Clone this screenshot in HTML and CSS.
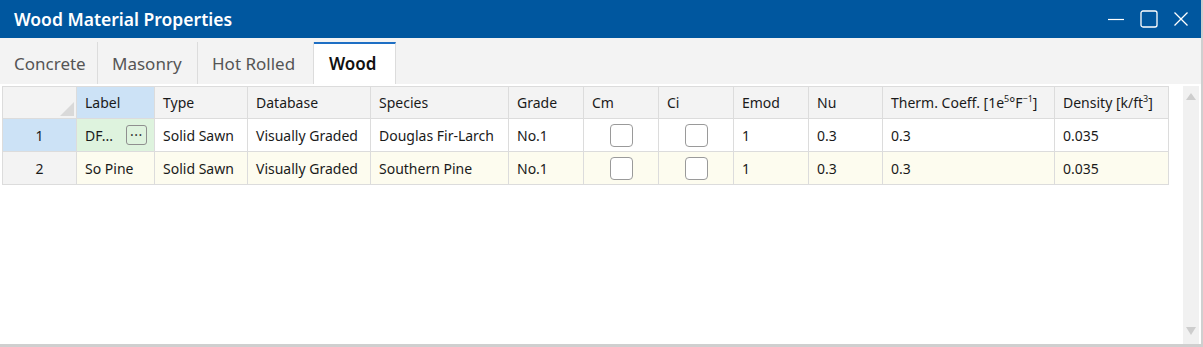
FILE: index.html
```html
<!DOCTYPE html>
<html lang="en">
<head>
    <meta charset="UTF-8">
    <meta name="viewport" content="width=device-width, initial-scale=1.0">
    <title>Wood Material Properties</title>
    <link rel="stylesheet" href="styles.css">
</head>
<body>
<div class="window">
    <div class="titlebar">
        <span class="title">Wood Material Properties</span>
        <div class="controls">
            <svg width="18" height="18" viewBox="0 0 18 18"><path d="M1 9.5h16" stroke="#fff" stroke-width="1.2"/></svg>
            <svg width="18" height="18" viewBox="0 0 18 18"><rect x="1" y="1" width="16" height="16" rx="2" fill="none" stroke="#fff" stroke-width="1.3"/></svg>
            <svg width="16" height="16" viewBox="0 0 16 16"><path d="M1.5 1.5l13 13M14.5 1.5l-13 13" stroke="#fff" stroke-width="1.3"/></svg>
        </div>
    </div>

    <div class="tabs">
        <div class="tab">Concrete</div>
        <div class="tab">Masonry</div>
        <div class="tab">Hot Rolled</div>
        <div class="tab active">Wood</div>
    </div>

    <div class="content">
        <div class="grid-wrap">
            <table class="grid">
                <colgroup>
                    <col style="width:74px"><col style="width:78px"><col style="width:93px"><col style="width:123px">
                    <col style="width:138px"><col style="width:75px"><col style="width:75px"><col style="width:75px">
                    <col style="width:75px"><col style="width:74px"><col style="width:172px"><col style="width:114px">
                </colgroup>
                <thead>
                    <tr>
                        <th class="corner"><span class="tri"></span></th>
                        <th class="sel">Label</th><th>Type</th><th>Database</th><th>Species</th><th>Grade</th>
                        <th>Cm</th><th>Ci</th><th>Emod</th><th>Nu</th>
                        <th>Therm. Coeff. [1e<sup>5</sup>°F<sup>−1</sup>]</th>
                        <th>Density [k/ft<sup>3</sup>]</th>
                    </tr>
                </thead>
                <tbody>
                    <tr>
                        <td class="rowhead sel">1</td>
                        <td class="editing"><div class="label-cell"><span>DF...</span><span class="dots">···</span></div></td>
                        <td>Solid Sawn</td><td>Visually Graded</td><td>Douglas Fir-Larch</td><td>No.1</td>
                        <td class="chk"><span class="box"></span></td><td class="chk"><span class="box"></span></td>
                        <td>1</td><td>0.3</td><td>0.3</td><td>0.035</td>
                    </tr>
                    <tr class="alt">
                        <td class="rowhead">2</td>
                        <td>So Pine</td><td>Solid Sawn</td><td>Visually Graded</td><td>Southern Pine</td><td>No.1</td>
                        <td class="chk"><span class="box"></span></td><td class="chk"><span class="box"></span></td>
                        <td>1</td><td>0.3</td><td>0.3</td><td>0.035</td>
                    </tr>
                </tbody>
            </table>
        </div>
        <div class="scrollbar">
            <span class="arrow up"></span>
            <span class="arrow down"></span>
        </div>
    </div>
</div>
<div class="desktop"></div>
</body>
</html>
```

FILE: styles.css
```css
html, body { margin: 0; padding: 0; background: #fff; }
body { font-family: "Noto Sans", "Open Sans", sans-serif; font-size: 14px; color: #1a1a1a; width: 1203px; height: 347px; overflow: hidden; }

.window { height: 344px; border-right: 2px solid #cfcfcf; box-sizing: border-box; display: flex; flex-direction: column; }

.titlebar { height: 38px; background: #00579f; color: #fff; display: flex; align-items: center; justify-content: space-between; flex-shrink: 0; }
.title { padding-left: 14px; font-size: 17.5px; font-weight: 600; }
.controls { display: flex; align-items: center; gap: 15px; padding-right: 12px; }

.tabs { height: 46px; background: #f3f3f3; display: flex; align-items: flex-end; flex-shrink: 0; }
.tab { height: 42px; line-height: 44px; padding: 0 14px; font-size: 17px; color: #555; border-right: 1px solid #dcdcdc; box-sizing: border-box; }
.tab:nth-child(1) { width: 98px; }
.tab:nth-child(2) { width: 100px; }
.tab:nth-child(3) { width: 116px; }
.tab.active { width: 82px; background: #fff; color: #111; font-weight: 600; border-top: 2px solid #1e6fc4; line-height: 40px; height: 42px; padding: 0 15px; }

.content { flex: 1; display: flex; padding-top: 2px; padding-left: 2px; }
.grid-wrap { flex: 1; }
.scrollbar { width: 16px; margin-right: 2px; background: #f1f1f1; display: flex; flex-direction: column; justify-content: space-between; align-items: center; padding: 7px 0 9px; box-sizing: border-box; }
.arrow { width: 0; height: 0; border-left: 5px solid transparent; border-right: 5px solid transparent; }
.arrow.up { border-bottom: 7px solid #cdcdcd; }
.arrow.down { border-top: 8px solid #cdcdcd; }

.grid { border-collapse: collapse; table-layout: fixed; width: 1167px; }
.grid th, .grid td { border: 1px solid #dcdcdc; padding: 0 8px; text-align: left; white-space: nowrap; overflow: hidden; font-weight: normal; }
.grid th { height: 31px; background: #f3f3f3; }
.grid td { height: 32px; background: #fff; }
.grid sup { font-size: 9px; vertical-align: 6px; line-height: 0; }
.grid th.sel, .grid td.sel { background: #cce2f6; }
.grid .corner { position: relative; }
.tri { position: absolute; right: 2px; bottom: 2px; width: 0; height: 0; border-left: 14px solid transparent; border-bottom: 14px solid #d9d9d9; }
.grid td.rowhead { text-align: center; background: #f3f3f3; }
.grid td.rowhead.sel { background: #cce2f6; }
.grid tr.alt td { background: #fdfcef; }
.grid tr.alt td.rowhead { background: #f3f3f3; }
.grid td.editing { background: #def3de; padding-right: 7px; }
.label-cell { display: flex; justify-content: space-between; align-items: center; }
.dots { width: 21px; height: 20px; border: 1px solid #8f8f8f; border-radius: 3px; text-align: center; line-height: 17px; font-size: 14px; letter-spacing: 0.5px; color: #333; box-sizing: border-box; }
.grid td.chk { text-align: center; padding: 0; }
.box { display: inline-block; width: 23px; height: 23px; border: 1px solid #9a9a9a; border-radius: 4px; background: #fff; vertical-align: middle; box-sizing: border-box; }

.desktop { height: 3px; background: #cfcfcf; }
```
